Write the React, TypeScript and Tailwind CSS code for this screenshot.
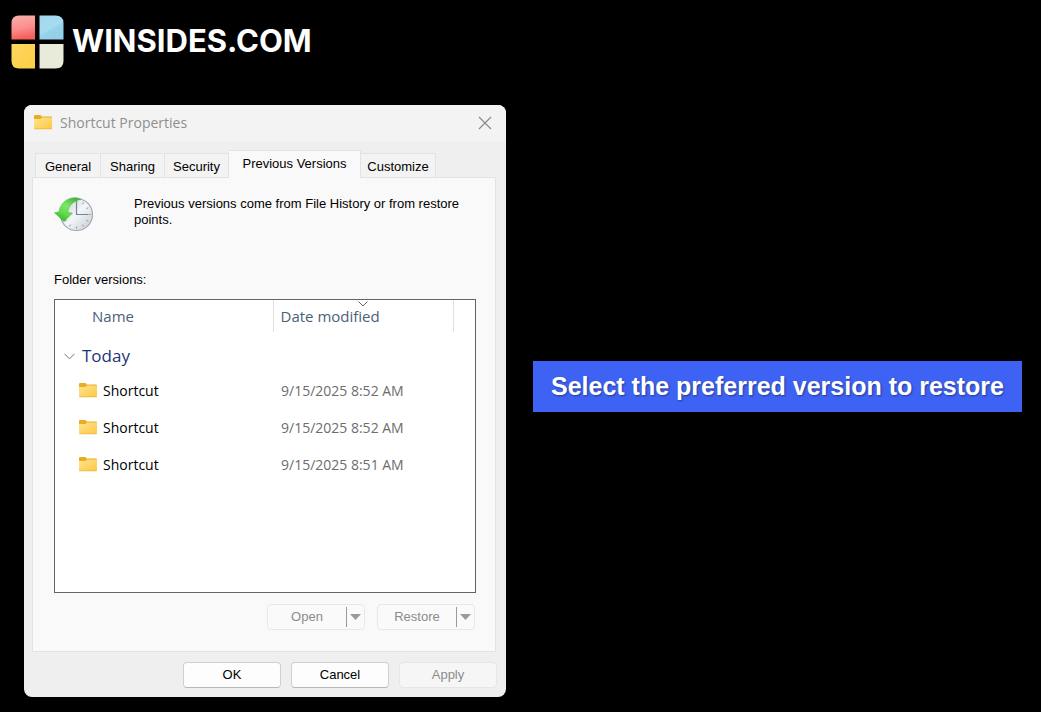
import { useState } from 'react';

const tabs = [
  { name: 'General', width: 'w-[66px]' },
  { name: 'Sharing', width: 'w-16' },
  { name: 'Security', width: 'w-16' },
  { name: 'Previous Versions', width: 'w-[132px]' },
  { name: 'Customize', width: 'w-[75px]' },
];

const versions = [
  { id: 1, name: 'Shortcut', date: '9/15/2025 8:52 AM' },
  { id: 2, name: 'Shortcut', date: '9/15/2025 8:52 AM' },
  { id: 3, name: 'Shortcut', date: '9/15/2025 8:51 AM' },
];

function Logo() {
  return (
    <svg width="53" height="54" viewBox="0 0 53 54" aria-hidden="true">
      <defs>
        <linearGradient id="logo-red" x1="0" y1="0" x2="0.2" y2="1">
          <stop offset="0" stopColor="#fbb0ac" />
          <stop offset="0.6" stopColor="#fb8d8b" />
          <stop offset="1" stopColor="#f5605c" />
        </linearGradient>
        <linearGradient id="logo-blue" x1="0" y1="0" x2="0.6" y2="1">
          <stop offset="0" stopColor="#a3d6ec" />
          <stop offset="0.6" stopColor="#a5dcf0" />
          <stop offset="0.65" stopColor="#97d3ea" />
          <stop offset="1" stopColor="#92d0e8" />
        </linearGradient>
        <linearGradient id="logo-yellow" x1="0" y1="0" x2="1" y2="1">
          <stop offset="0" stopColor="#fdd662" />
          <stop offset="1" stopColor="#fdcd45" />
        </linearGradient>
      </defs>
      <path d="M8 0.5H24V24.5H0.5V8Q0.5 0.5 8 0.5Z" fill="url(#logo-red)" />
      <path d="M28.5 0.5H44.5Q52.5 0.5 52.5 8V24.5H28.5Z" fill="url(#logo-blue)" />
      <path d="M0.5 29H24V53.5H8Q0.5 53.5 0.5 46Z" fill="url(#logo-yellow)" />
      <path d="M28.5 29H52.5V46Q52.5 53.5 44.5 53.5H28.5Z" fill="#e9ebda" />
    </svg>
  );
}

function FolderIcon() {
  return (
    <svg width="18" height="15" viewBox="0 0 18 15" className="shrink-0" aria-hidden="true">
      <defs>
        <linearGradient id="folder" x1="0" y1="0" x2="1" y2="1">
          <stop offset="0" stopColor="#ffe492" />
          <stop offset="1" stopColor="#fcc840" />
        </linearGradient>
      </defs>
      <path d="M0 1Q0 0 1 0H6Q6.700 0 7 0.600L7.700 1.500H17Q18 1.500 18 2.500V7H0Z" fill="#e8ad23" />
      <path d="M0 4H6.500L8 2.500H18V13Q18 14 17 14H1Q0 14 0 13Z" fill="url(#folder)" />
      <path d="M0.300 13.800H17.700" stroke="#e6b13a" strokeWidth="0.700" />
    </svg>
  );
}

function HistoryIcon() {
  return (
    <svg width="40" height="36" viewBox="0 0 40 36" className="shrink-0" aria-hidden="true">
      <defs>
        <linearGradient id="clock-face" x1="0" y1="0" x2="1" y2="1">
          <stop offset="0" stopColor="#c7cdd3" />
          <stop offset="0.5" stopColor="#f3f6f9" />
          <stop offset="1" stopColor="#c3c9cf" />
        </linearGradient>
        <linearGradient id="clock-arrow" x1="0.8" y1="0" x2="0.3" y2="1">
          <stop offset="0" stopColor="#43ad3a" />
          <stop offset="0.4" stopColor="#7be866" />
          <stop offset="0.7" stopColor="#62dc4c" />
          <stop offset="1" stopColor="#35b52c" />
        </linearGradient>
      </defs>
      <circle cx="22.5" cy="18.5" r="16" fill="url(#clock-face)" stroke="#a3a9af" strokeWidth="1.200" />
      <path
        d="M22.5 30.500V32.500M36.500 18.500H34.500M29.500 6.500L28.500 8.300M34.300 11.700L32.500 12.700M34.300 25.300L32.500 24.300M29.500 30.500L28.500 28.700M15.500 30.500L16.500 28.700M10.800 25.300L12.500 24.300"
        stroke="#8a949e"
      />
      <path d="M22.500 4V18.500H34" fill="none" stroke="#71859a" strokeWidth="1.200" />
      <path
        d="M27 3.200C22 0.500 15.500 1.300 10.500 5.500C7.300 8.300 5.500 11.800 5 15.800L0.500 16.800L10 25.500L18.500 17L13.800 16.500C14.300 10.500 18.500 5 27 3.200Z"
        fill="url(#clock-arrow)"
        stroke="#47b53d"
        strokeWidth="0.500"
      />
    </svg>
  );
}

function SplitButton({ label }: { label: string }) {
  return (
    <div className="flex h-[26px] w-[98px] items-center rounded border border-[#e8e8e8] bg-[#fafafa] text-[#8b8b8b]">
      <button type="button" disabled className="h-full flex-1">
        {label}
      </button>
      <button
        type="button"
        disabled
        aria-label={`${label} options`}
        className="flex h-5 w-[18px] items-center justify-center border-l border-[#9a9a9a]"
      >
        <svg width="11" height="6" viewBox="0 0 11 6" aria-hidden="true">
          <path d="M0 0H11L5.500 6Z" fill="#9a9a9a" />
        </svg>
      </button>
    </div>
  );
}

export default function App() {
  const [activeTab, setActiveTab] = useState('Previous Versions');

  return (
    <div className="min-h-screen bg-black pb-[15px] font-['Liberation_Sans',sans-serif]">
      {/* Brand */}
      <header className="flex items-center gap-2 px-[11px] pt-[15px]">
        <Logo />
        <span className="pb-[2px] font-['Inter',sans-serif] text-[31px] leading-9 font-bold text-white">
          WINSIDES.COM
        </span>
      </header>

      <main className="mt-9 grid grid-cols-[minmax(0,482px)_minmax(0,489px)] items-center gap-[27px] pr-[19px] pl-6">
        {/* Properties window */}
        <section
          aria-label="Shortcut Properties"
          className="rounded-lg bg-[#efefef] pb-[9px] text-[13px] leading-4 text-black"
        >
          <div className="flex h-[37px] items-center rounded-t-lg bg-[#f3f3f3] pr-[14px] pb-[2px] pl-[10px] font-['Open_Sans',sans-serif]">
            <FolderIcon />
            <h1 className="ml-2 flex-1 text-sm text-[#8f8f8f]">Shortcut Properties</h1>
            <button type="button" aria-label="Close">
              <svg width="14" height="14" viewBox="0 0 14 14" aria-hidden="true">
                <path d="M1 1L13 13M13 1L1 13" stroke="#8a8a8a" strokeWidth="1.200" />
              </svg>
            </button>
          </div>

          <div role="tablist" className="mt-2 flex h-[27px] items-end pl-[11px]">
            {tabs.map((tab) => (
              <button
                key={tab.name}
                type="button"
                role="tab"
                aria-selected={tab.name === activeTab}
                onClick={() => setActiveTab(tab.name)}
                className={`${tab.width} border-t border-r border-[#e3e3e3] whitespace-nowrap first:border-l ${
                  tab.name === activeTab
                    ? 'relative -mb-px h-7 bg-[#f9f9f9] pb-[2px]'
                    : 'h-6 bg-[#f3f3f3] pt-[2px]'
                }`}
              >
                {tab.name}
              </button>
            ))}
          </div>

          <div
            role="tabpanel"
            className="mr-[10px] ml-2 border border-[#e3e3e3] bg-[#f9f9f9] pt-[18px] pr-[19px] pb-[21px] pl-[21px]"
          >
            <div className="flex min-h-[76px] items-start gap-10">
              <HistoryIcon />
              <p className="flex-1">
                Previous versions come from File History or from restore points.
              </p>
            </div>

            <h2 id="versions-label">Folder versions:</h2>

            <div className="mt-[11px] min-h-[294px] border border-[#646464] bg-white font-['Open_Sans',sans-serif] text-sm leading-5">
              <table aria-labelledby="versions-label" className="w-full table-fixed text-left">
                <thead>
                  <tr className="h-8 text-[15px] text-[#4c607a]">
                    <th className="w-[218px] border-r border-[#e0e0e0] pl-[37px] font-normal">
                      Name
                    </th>
                    <th className="relative w-[180px] border-r border-[#e0e0e0] pl-[7px] font-normal">
                      <svg
                        width="10"
                        height="6"
                        viewBox="0 0 10 6"
                        className="absolute top-px left-1/2 -translate-x-1/2"
                        aria-hidden="true"
                      >
                        <path d="M0.500 0.500L5 5L9.500 0.500" fill="none" stroke="#666" />
                      </svg>
                      Date modified
                    </th>
                    <td />
                  </tr>
                </thead>
                <tbody>
                  <tr className="h-10">
                    <th colSpan={3} className="pt-2 pl-[9px] font-normal">
                      <button
                        type="button"
                        aria-expanded="true"
                        className="flex items-center gap-[7px] text-[17px] leading-6 text-[#1e3378]"
                      >
                        <svg width="11" height="7" viewBox="0 0 11 7" aria-hidden="true">
                          <path d="M0.500 0.800L5.500 5.800L10.500 0.800" fill="none" stroke="#777" />
                        </svg>
                        Today
                      </button>
                    </th>
                  </tr>
                  {versions.map((version) => (
                    <tr key={version.id} className="h-[37px]">
                      <td className="pl-6">
                        <div className="flex items-center gap-[6px]">
                          <FolderIcon />
                          {version.name}
                        </div>
                      </td>
                      <td className="pl-2 text-[#6d6d6d]">{version.date}</td>
                      <td />
                    </tr>
                  ))}
                </tbody>
              </table>
            </div>

            <div className="mt-[11px] flex justify-end gap-3 pr-px">
              <SplitButton label="Open" />
              <SplitButton label="Restore" />
            </div>
          </div>

          <div className="mt-[10px] flex justify-end gap-[10px] pr-[9px]">
            <button
              type="button"
              className="h-[26px] w-[98px] rounded border border-[#d0d0d0] border-b-[#b8b8b8] bg-[#fdfdfd]"
            >
              OK
            </button>
            <button
              type="button"
              className="h-[26px] w-[98px] rounded border border-[#d0d0d0] border-b-[#b8b8b8] bg-[#fdfdfd]"
            >
              Cancel
            </button>
            <button
              type="button"
              disabled
              className="h-[26px] w-[98px] rounded border border-[#e6e6e6] bg-[#f6f6f6] text-[#8b8b8b]"
            >
              Apply
            </button>
          </div>
        </section>

        {/* Callout */}
        <p className="mb-[29px] bg-[#3e62f4] py-[9px] text-center text-[25px] leading-[33px] font-bold text-white [text-shadow:1px_1px_2px_rgba(0,0,0,0.4)]">
          Select the preferred version to restore
        </p>
      </main>
    </div>
  );
}
